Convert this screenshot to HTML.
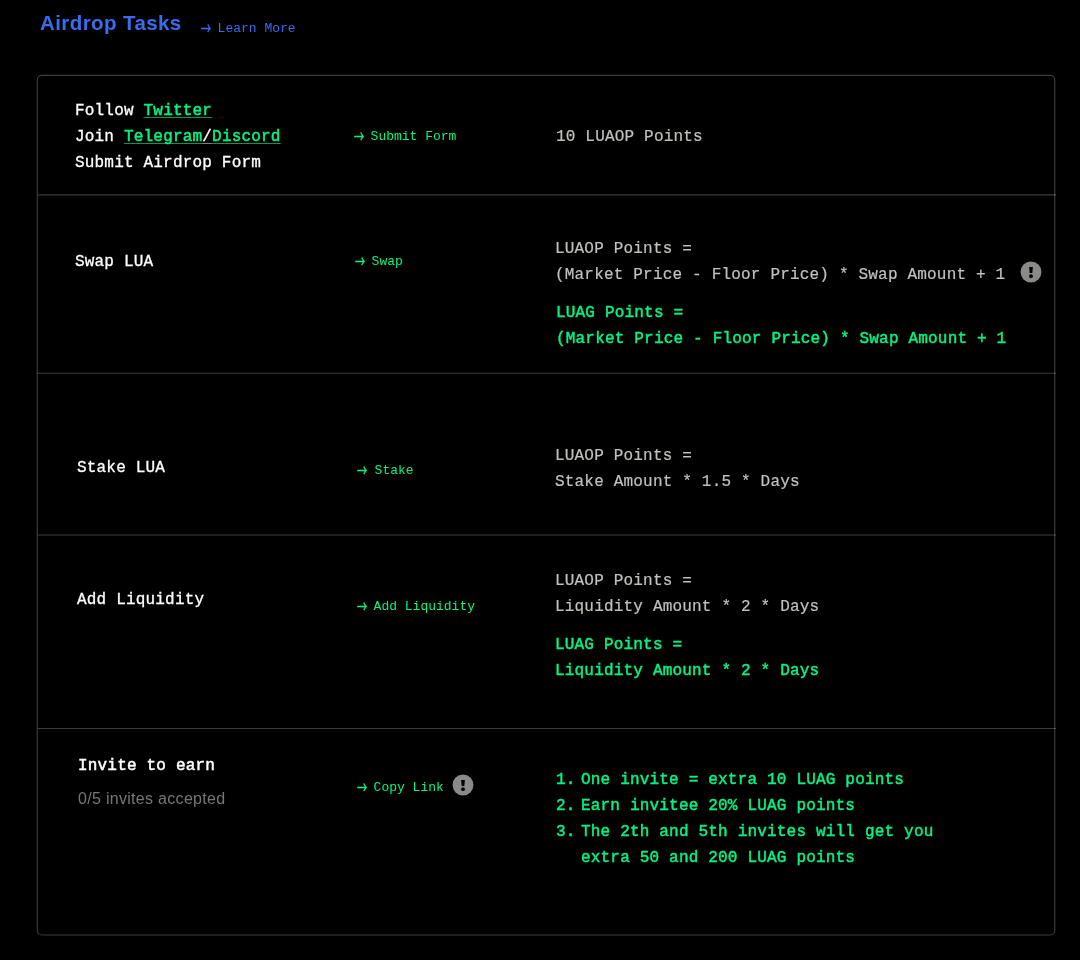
<!DOCTYPE html>
<html lang="en">
<head>
<meta charset="utf-8">
<title>Airdrop Tasks</title>
<style>
  html, body { margin: 0; padding: 0; background: #000; }
  body { width: 1080px; height: 960px; position: relative; overflow: hidden;
         font-family: "Liberation Mono", monospace; color: #fff; }
  .t, h1 { will-change: transform; }
  .t { position: absolute; white-space: pre; line-height: 26px; height: 26px; font-size: 16px; letter-spacing: 0.19px; }
  .w { color: #fff; font-weight: 400; -webkit-text-stroke-width: 0.3px; }
  .g { color: #c3c1bc; -webkit-text-stroke-width: 0.2px; }
  .gr { color: #05f283; }
  .gb { color: #05f283; font-weight: 400; -webkit-text-stroke-width: 0.45px; }
  .s { font-size: 13px; letter-spacing: 0; }
  .bl { color: #3b6cf0; }
  a { color: #05f283; text-decoration: underline; text-decoration-color: rgba(5,242,131,0.62); text-decoration-skip-ink: none; text-decoration-thickness: 1px; text-underline-offset: 2px; -webkit-text-stroke-width: 0.5px; }
  h1 { position: absolute; margin: 0; left: 40px; top: 10px; font-family: "Liberation Sans", sans-serif;
       font-weight: 700; font-size: 20.5px; letter-spacing: 0.41px; line-height: 26px; color: #3b6cf0; white-space: pre; }
  .sans { font-family: "Liberation Sans", sans-serif; letter-spacing: 0.3px; color: #777; }
  .ar { position: absolute; left: 0.3px; top: -2px; -webkit-text-stroke-width: 0.35px; font-family: "Noto Sans CJK SC", sans-serif; font-size: 14px; line-height: 26px; letter-spacing: 0; transform: scale(0.72,1.12); transform-origin: 0 50%; }
  .s { padding-left: 8.8px; }
  .n { display: inline-block; width: 25px; }
  .sl { text-decoration: underline; text-decoration-color: rgba(255,255,255,0.5); text-decoration-skip-ink: none; text-decoration-thickness: 1px; text-underline-offset: 2px; }
  .ic { position: absolute; }
</style>
</head>
<body>
<h1>Airdrop Tasks</h1>
<div class="t s bl" style="left:200.8px;top:16px;"><span class="ar" style="margin-left:-0.8px">→</span> Learn More</div>

<svg style="position:absolute;left:0;top:0" width="1080" height="960" viewBox="0 0 1080 960" fill="none" stroke="#fff" stroke-opacity="0.24" stroke-width="1.15">
<rect x="37.3" y="75.4" width="1017.45" height="859.6" rx="4.5"/>
<path d="M37.8 194.9H1056.1M37.8 373.2H1056.1M37.8 535H1056.1M37.8 728.5H1056.1"/>
</svg>

<!-- row 1 -->
<div class="t w" style="left:75px;top:98px;">Follow <a>Twitter</a></div>
<div class="t w" style="left:75px;top:124px;">Join <a>Telegram</a><span class="sl">/</span><a>Discord</a></div>
<div class="t w" style="left:75px;top:150px;">Submit Airdrop Form</div>
<div class="t s gr" style="left:354px;top:124px;"><span class="ar" style="margin-left:-0.5px">→</span> Submit Form</div>
<div class="t g" style="left:556px;top:124px;">10 LUAOP Points</div>

<!-- row 2 -->
<div class="t w" style="left:75px;top:249px;">Swap LUA</div>
<div class="t s gr" style="left:355px;top:249px;"><span class="ar" style="margin-left:-0.8px">→</span> Swap</div>
<div class="t g" style="left:555px;top:236px;">LUAOP Points =</div>
<div class="t g" style="left:555px;top:262px;">(Market Price - Floor Price) * Swap Amount + 1</div>
<div class="t gb" style="left:556px;top:300px;">LUAG Points =</div>
<div class="t gb" style="left:556px;top:326px;">(Market Price - Floor Price) * Swap Amount + 1</div>

<svg class="ic" style="left:1019.5px;top:261px" width="22" height="22" viewBox="0 0 22 22"><circle cx="11" cy="11" r="10.45" fill="#8a8a88"/><path d="M9.1 5.9h3.8l-.6 6.2h-2.6z" fill="#000"/><circle cx="11" cy="15.2" r="1.9" fill="#000"/></svg>

<!-- row 3 -->
<div class="t w" style="left:77px;top:455px;">Stake LUA</div>
<div class="t s gr" style="left:357.5px;top:458px;"><span class="ar" style="margin-left:-1px">→</span> Stake</div>
<div class="t g" style="left:555.3px;top:443px;">LUAOP Points =</div>
<div class="t g" style="left:555.3px;top:469px;">Stake Amount * 1.5 * Days</div>

<!-- row 4 -->
<div class="t w" style="left:77px;top:587px;">Add Liquidity</div>
<div class="t s gr" style="left:357px;top:594px;"><span class="ar">→</span> Add Liquidity</div>
<div class="t g" style="left:555px;top:568px;">LUAOP Points =</div>
<div class="t g" style="left:555px;top:594px;">Liquidity Amount * 2 * Days</div>
<div class="t gb" style="left:555px;top:632px;">LUAG Points =</div>
<div class="t gb" style="left:555px;top:658px;">Liquidity Amount * 2 * Days</div>

<!-- row 5 -->
<div class="t w" style="left:78px;top:753px;-webkit-text-stroke-width:0.5px;">Invite to earn</div>
<div class="t sans" style="left:78px;top:786px;">0/5 invites accepted</div>
<div class="t s gr" style="left:357px;top:775px;"><span class="ar">→</span> Copy Link</div>
<div class="t gb" style="left:556px;top:767px;"><span class="n">1.</span>One invite = extra 10 LUAG points</div>
<div class="t gb" style="left:556px;top:793px;"><span class="n">2.</span>Earn invitee 20% LUAG points</div>
<div class="t gb" style="left:556px;top:819px;"><span class="n">3.</span>The 2th and 5th invites will get you</div>
<div class="t gb" style="left:556px;top:845px;"><span class="n"></span>extra 50 and 200 LUAG points</div>
<svg class="ic" style="left:451.6px;top:774px" width="22" height="22" viewBox="0 0 22 22"><circle cx="11" cy="11" r="10.45" fill="#8a8a88"/><path d="M9.1 5.9h3.8l-.6 6.2h-2.6z" fill="#000"/><circle cx="11" cy="15.2" r="1.9" fill="#000"/></svg>
</body>
</html>
